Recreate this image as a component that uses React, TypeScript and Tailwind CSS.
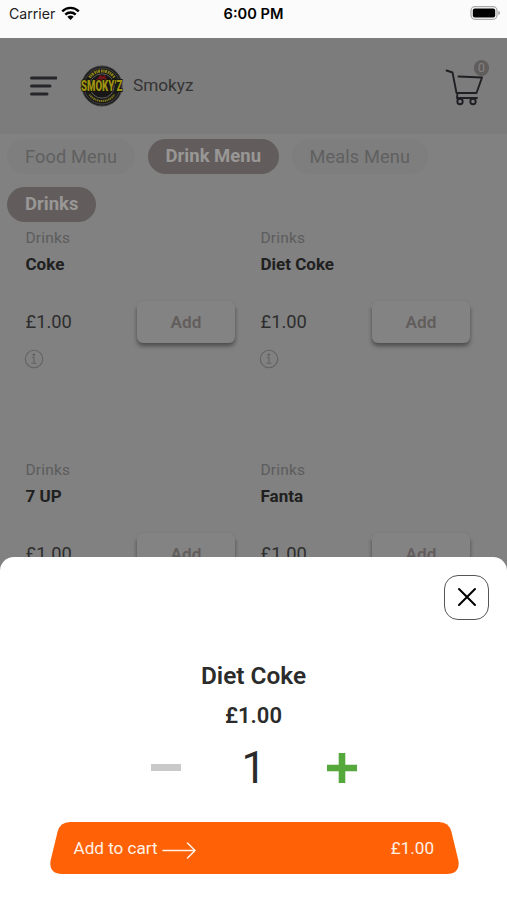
import type { ReactNode } from "react";

const drinks = ["Coke", "Diet Coke", "7 UP", "Fanta"];

function StatusBar() {
  return (
    <div className="relative flex h-[38px] items-start justify-between bg-[#fbfbfb] pl-[9px] pr-[6px] pt-[4px] text-black">
      <div className="flex items-center gap-[6px]">
        <span className="font-['Inter',sans-serif] text-[14.1px] leading-[20px] text-[#222]">Carrier</span>
        <svg width="19" height="15" viewBox="0 0 19 15" className="-mt-px" fill="none" stroke="#000" strokeWidth="2.4">
          <path d="M1.2 5.3C5.8.7 13.2.7 17.8 5.3" />
          <path d="M4.3 8.6C7.2 5.8 11.8 5.8 14.7 8.6" />
          <path d="M9.5 14 6.3 10.8C8.1 9.1 10.9 9.1 12.7 10.8Z" fill="#000" stroke="none" />
        </svg>
      </div>
      <span className="absolute left-0 w-full text-center font-['Inter',sans-serif] text-[14.6px] font-semibold leading-[20px]">6:00 PM</span>
      <svg width="31" height="15" viewBox="0 0 31 15" className="mt-[2px]">
        <rect x="1" y=".7" width="26" height="12.6" rx="4" fill="#fbfbfb" stroke="#aaa" strokeWidth="1.3" />
        <rect x="2.8" y="2.5" width="22.4" height="9" rx="2" />
        <path d="M28.2 4.8q4 2.2 0 4.4z" fill="#aaa" />
      </svg>
    </div>
  );
}

function Logo() {
  return (
    <svg width="44" height="42" viewBox="0 0 44 42">
      <circle cx="22" cy="21" r="20" fill="#191b1b" stroke="#3e3d3c" strokeWidth="1" />
      <circle cx="22" cy="21" r="18" fill="none" stroke="#53504c" strokeWidth=".7" />
      <circle cx="22" cy="21" r="12.2" fill="#181617" stroke="#5e5c58" strokeWidth="1" />
      <path d="m15 15.500 3-2.500 2-3 2 1.500 3-1.500 1 3 3 2.500z" fill="#74151b" />
      <path d="M9.500 12.500a15.200 15.200 0 0 1 25 0" fill="none" stroke="#8f8318" strokeWidth="3" strokeDasharray="1.6 .6 1.2 .5 2 .9" />
      <path d="M9.500 29.500a15.200 15.200 0 0 0 25 0" fill="none" stroke="#81771b" strokeWidth="2" strokeDasharray="1.2 .6 1.5 .5" />
      <text transform="translate(21.700 26.200) scale(1 1.600)" textAnchor="middle" fill="#a09313" stroke="#171808" strokeWidth="1.1" paintOrder="stroke" fontFamily="Roboto, sans-serif" fontSize="9.600" fontWeight="900">SMOKY’Z</text>
    </svg>
  );
}

function Header() {
  return (
    <header className="flex h-[96px] items-center bg-[#7c7c7c] pl-[28px] pr-[17px]">
      <svg width="29" height="22" viewBox="0 0 29 22" stroke="#25252b" strokeWidth="3" strokeLinecap="round">
        <path d="M3.500 3H28M3.500 11H22M3.500 19H19" />
      </svg>
      <div className="ml-[23px]"><Logo /></div>
      <span className="-mt-px ml-[9px] text-[17.2px] leading-[23px] text-[#343434]">Smokyz</span>
      <div className="relative ml-auto h-[46px] w-[46px]">
        <svg width="46" height="46" viewBox="0 0 46 46" fill="none" stroke="#202024" strokeWidth="1.9" strokeLinecap="round" strokeLinejoin="round">
          <path d="m2.500 7.500 6 2 4 20.500h20l5.500-15.500-23.500-1M13.500 30l-.5 5h20" />
          <circle cx="16" cy="38.500" r="2.700" />
          <circle cx="29" cy="38.500" r="2.700" />
        </svg>
        <span className="absolute right-[1px] top-[-3px] flex h-[16px] w-[15px] items-center justify-center rounded-full bg-[#605d5d] text-[13px] text-[#858080]">0</span>
      </div>
    </header>
  );
}

function Pill({ children, active = false }: { children: ReactNode; active?: boolean }) {
  return (
    <div className={`flex h-[35px] items-center rounded-full px-[18px] whitespace-nowrap ${active ? "bg-[#625d5c] text-[18.5px] font-bold text-[#999796]" : "bg-[#7e7e7e] text-[18.2px] tracking-[0.12px] text-[#606060]"}`}>
      <span className="leading-[27px]">{children}</span>
    </div>
  );
}

function Product({ name }: { name: string }) {
  return (
    <article className="h-[232px]">
      <p className="text-[15.5px] leading-[20px] tracking-[0.2px] text-[#5c5c5c]">Drinks</p>
      <h2 className="mt-[5px] text-[17px] font-bold leading-[22px] text-[#202020]">{name}</h2>
      <div className="mt-[26px] flex h-[42px] items-start">
        <span className="mt-[10px] w-[111.5px] text-[18.3px] leading-[22px] text-[#2d2d2d]">£1.00</span>
        <div className="-ml-[4px] -mt-[4px] h-[54px] w-[106px] px-[4px] pt-[4px] [clip-path:polygon(0_10px,4px_10px,4px_0,102px_0,102px_10px,100%_10px,100%_100%,0_100%)]">
          <div className="flex h-[42px] items-center justify-center rounded-[6px] bg-[#838383] pt-[2px] text-[17.2px] font-semibold text-[#625d5c] shadow-[0_3px_4px_rgba(0,0,0,0.42)]">
            Add
          </div>
        </div>
      </div>
      <svg width="20" height="20" viewBox="0 0 20 20" className="-ml-[1.5px] mt-[6px]" fill="none" stroke="#636363" strokeWidth="1.1">
        <circle cx="10" cy="10" r="8.7" />
        <circle cx="9.8" cy="5.8" r=".8" fill="#636363" />
        <path d="M8 8.5h2v5.8M7.5 14.3h5" />
      </svg>
    </article>
  );
}

function CartSheet() {
  return (
    <section className="absolute inset-x-0 bottom-0 flex h-[343px] flex-col rounded-t-[14px] bg-white px-[18px] pt-[17.5px] text-[#2b2b2b]">
      <button className="flex h-[45px] w-[45px] shrink-0 items-center justify-center self-end rounded-[14px] border-[1.5px] border-[#555]">
        <svg width="20" height="20" viewBox="0 0 20 20" stroke="#000" strokeWidth="2" strokeLinecap="round"><path d="m2 2 16 16M18 2 2 18" /></svg>
      </button>
      <h1 className="mt-[40px] text-center text-[24.4px] font-semibold leading-[32px]">Diet Coke</h1>
      <p className="mt-[10px] text-center text-[22px] font-semibold leading-[28px]">£1.00</p>
      <div className="mt-[16px] flex h-[44px] items-center justify-between pl-[132.5px] pr-[132px]">
        <div className="h-[7px] w-[30px] bg-[#c9c9ca]" />
        <span className="mt-[2px] text-[43.5px] leading-[44px]">1</span>
        <svg width="30" height="30" viewBox="0 0 30 30" fill="#54a83c"><path d="M11.7 0h6.6v11.7H30v6.6H18.3V30h-6.6V18.3H0v-6.6h11.7z" /></svg>
      </div>
      <button className="relative ml-[31.5px] mr-[30.5px] mt-[32.5px] flex h-[53px] shrink-0 items-center justify-between pl-[24px] pr-[24.5px] text-[17.1px] text-[#fff1e5]">
        <svg className="absolute inset-0" width="409" height="53" viewBox="0 0 409 53" fill="#ff6206">
          <path d="M20 0H389Q399 0 401.500 10L408.500 39Q410 52 397 52H12Q-1 52 .5 39L7.500 10Q10 0 20 0Z" />
        </svg>
        <span className="relative flex items-center gap-[4.5px]">
          Add to cart
          <svg width="35" height="17" viewBox="0 0 35 17" className="mt-[4px]" fill="none" stroke="#fff1e5" strokeWidth="1.5" strokeLinecap="round"><path d="M1 8.500H33M25.500 1l7.500 7.500-7.500 7.500" /></svg>
        </span>
        <span className="relative">£1.00</span>
      </button>
    </section>
  );
}

export default function App() {
  return (
    <div className="relative h-[900px] w-[507px] overflow-hidden bg-[#818181] font-['Roboto',sans-serif]">
      <StatusBar />
      <Header />
      <nav className="mt-[5px] flex gap-[12.5px] pl-[7px]">
        <Pill>Food Menu</Pill>
        <Pill active>Drink Menu</Pill>
        <Pill>Meals Menu</Pill>
      </nav>
      <div className="mt-[12.5px] flex pl-[7px]"><Pill active>Drinks</Pill></div>
      <main className="mt-[6.5px] grid grid-cols-[235px_235px] pl-[25.5px]">
        {drinks.map((name) => <Product key={name} name={name} />)}
      </main>
      <CartSheet />
    </div>
  );
}
